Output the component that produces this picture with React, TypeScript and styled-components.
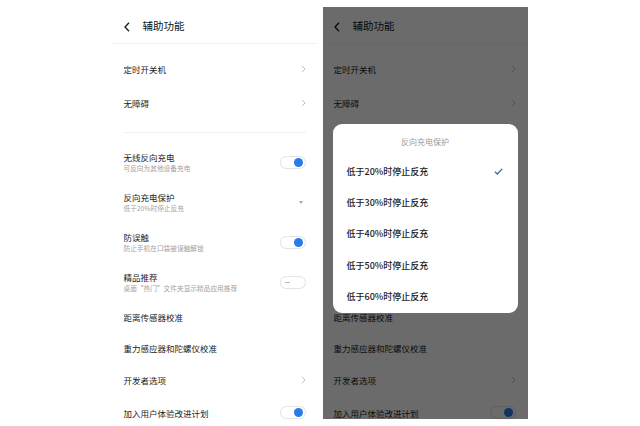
import styled, { createGlobalStyle } from 'styled-components';

const GlobalStyle = createGlobalStyle`
  html, body {
    margin: 0;
    padding: 0;
    background: #ffffff;
  }
  body {
    font-family: "Noto Sans CJK SC", "Noto Sans", sans-serif;
  }
`;

const Stage = styled.div`
  width: 640px;
  height: 426px;
  box-sizing: border-box;
  padding-top: 7px;
  display: flex;
  justify-content: center;
  gap: 5px;
  background: #ffffff;
  overflow: hidden;
`;

const Screen = styled.div`
  position: relative;
  width: 205px;
  height: 412px;
  background: #ffffff;
  overflow: hidden;
  display: flex;
  flex-direction: column;
`;

const Header = styled.div`
  height: 37px;
  flex-shrink: 0;
  box-sizing: border-box;
  display: flex;
  align-items: center;
  gap: 13px;
  padding: 3px 0 0 11px;
  border-bottom: 1px solid #f3f3f3;
`;

const HeaderTitle = styled.div`
  font-size: 10.5px;
  color: #111111;
  line-height: 1;
`;

const Group = styled.div<{ $top: number; $bottom: number }>`
  padding: ${(p) => p.$top}px 0 ${(p) => p.$bottom}px;
  flex-shrink: 0;
`;

const Divider = styled.div`
  height: 1px;
  margin: 0 12px 0 11px;
  background: #efefef;
  flex-shrink: 0;
`;

const Row = styled.div<{ $h: number }>`
  height: ${(p) => p.$h}px;
  display: flex;
  align-items: center;
  justify-content: space-between;
  padding: 0 12px 0 11px;
  box-sizing: border-box;
`;

const TextBlock = styled.div`
  display: flex;
  flex-direction: column;
  gap: 1px;
`;

const Title = styled.div`
  font-size: 8.5px;
  line-height: 10px;
  color: #1c1c1c;
  white-space: nowrap;
`;

const Sub = styled.div`
  font-size: 6.7px;
  line-height: 10px;
  color: #a3a3a3;
  white-space: nowrap;
`;

const Track = styled.span<{ $on: boolean }>`
  width: 26px;
  height: 13px;
  box-sizing: border-box;
  border: 1px solid #e4e4e4;
  border-radius: 7px;
  display: flex;
  align-items: center;
  justify-content: ${(p) => (p.$on ? 'flex-end' : 'flex-start')};
  padding: 0 2px 0 4px;
  background: #ffffff;
  box-shadow: 0 0 1px rgba(0, 0, 0, 0.05);
`;

const Knob = styled.span`
  width: 9px;
  height: 9px;
  border-radius: 50%;
  background: #2a7be6;
`;

const Dash = styled.span`
  width: 5px;
  height: 1px;
  background: #b8b8b8;
`;

const Caret = styled.span`
  width: 0;
  height: 0;
  margin-right: 3px;
  border-left: 2.5px solid transparent;
  border-right: 2.5px solid transparent;
  border-top: 3px solid #a8a8a8;
`;

const Overlay = styled.div`
  position: absolute;
  inset: 0;
  background: rgba(0, 0, 0, 0.58);
  box-sizing: border-box;
  padding: 117px 10px 0;
`;

const Dialog = styled.div`
  height: 189px;
  background: #ffffff;
  border-radius: 9px;
  display: flex;
  flex-direction: column;
`;

const DialogTitle = styled.div`
  height: 32px;
  box-sizing: border-box;
  padding-top: 12px;
  text-align: center;
  font-size: 8px;
  line-height: 12px;
  color: #9a9a9a;
`;

const Option = styled.div`
  height: 31.4px;
  display: flex;
  align-items: center;
  justify-content: space-between;
  padding: 0 15px 0 14px;
`;

const OptionText = styled.span`
  font-size: 9px;
  line-height: 12px;
  font-weight: 500;
  color: #1a1a1a;
  white-space: nowrap;
`;

function Chevron({ dir = 'right' }: { dir?: 'left' | 'right' }) {
  if (dir === 'left') {
    return (
      <svg width="6" height="10" viewBox="0 0 6 10">
        <polyline points="5,0.8 1,5 5,9.2" fill="none" stroke="#1a1a1a" strokeWidth="1.3" />
      </svg>
    );
  }
  return (
    <svg width="5" height="8" viewBox="0 0 5 8">
      <polyline points="1,0.8 4,4 1,7.2" fill="none" stroke="#b9b9b9" strokeWidth="0.9" />
    </svg>
  );
}

function Check() {
  return (
    <svg width="9" height="7" viewBox="0 0 9 7">
      <polyline points="0.8,3.6 3.3,6 8.2,0.9" fill="none" stroke="#3d62b0" strokeWidth="1.3" />
    </svg>
  );
}

function Toggle({ on }: { on: boolean }) {
  return <Track $on={on}>{on ? <Knob /> : <Dash />}</Track>;
}

type Item = {
  title: string;
  sub?: string;
  right?: 'chevron' | 'on' | 'off' | 'caret';
  h: number;
};

const TOP_ITEMS: Item[] = [
  { title: '定时开关机', right: 'chevron', h: 34 },
  { title: '无障碍', right: 'chevron', h: 34 },
];

const BOTTOM_ITEMS: Item[] = [
  { title: '无线反向充电', sub: '可反向为其他设备充电', right: 'on', h: 40 },
  { title: '反向充电保护', sub: '低于20%时停止反充', right: 'caret', h: 40 },
  { title: '防误触', sub: '防止手机在口袋被误触解锁', right: 'on', h: 40 },
  { title: '精品推荐', sub: '桌面“热门”文件夹显示精品应用推荐', right: 'off', h: 40 },
  { title: '距离传感器校准', h: 30 },
  { title: '重力感应器和陀螺仪校准', h: 31 },
  { title: '开发者选项', right: 'chevron', h: 33 },
  { title: '加入用户体验改进计划', right: 'on', h: 33 },
];

const OPTIONS = ['20', '30', '40', '50', '60'];

function SettingRow({ item }: { item: Item }) {
  return (
    <Row $h={item.h}>
      <TextBlock>
        <Title>{item.title}</Title>
        {item.sub && <Sub>{item.sub}</Sub>}
      </TextBlock>
      {item.right === 'chevron' && <Chevron />}
      {item.right === 'on' && <Toggle on />}
      {item.right === 'off' && <Toggle on={false} />}
      {item.right === 'caret' && <Caret />}
    </Row>
  );
}

function SettingsPage() {
  return (
    <>
      <Header>
        <Chevron dir="left" />
        <HeaderTitle>辅助功能</HeaderTitle>
      </Header>
      <Group $top={8} $bottom={12}>
        {TOP_ITEMS.map((item) => (
          <SettingRow key={item.title} item={item} />
        ))}
      </Group>
      <Divider />
      <Group $top={9} $bottom={0}>
        {BOTTOM_ITEMS.map((item) => (
          <SettingRow key={item.title} item={item} />
        ))}
      </Group>
    </>
  );
}

export default function App() {
  return (
    <>
      <GlobalStyle />
      <Stage>
        <Screen>
          <SettingsPage />
        </Screen>
        <Screen>
          <SettingsPage />
          <Overlay>
            <Dialog>
              <DialogTitle>反向充电保护</DialogTitle>
              {OPTIONS.map((pct, i) => (
                <Option key={pct}>
                  <OptionText>低于{pct}%时停止反充</OptionText>
                  {i === 0 && <Check />}
                </Option>
              ))}
            </Dialog>
          </Overlay>
        </Screen>
      </Stage>
    </>
  );
}
